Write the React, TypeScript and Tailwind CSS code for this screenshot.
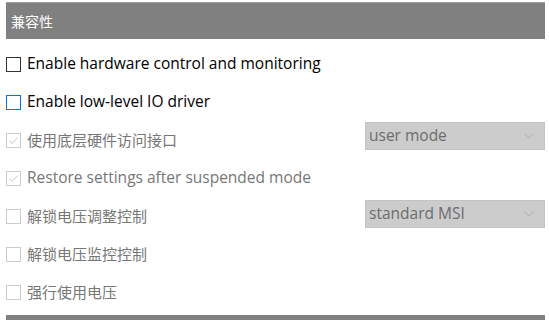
import React from "react";

const font = { fontFamily: '"Open Sans", "Noto Sans CJK SC", sans-serif' };

function Box({ state }: { state: "normal" | "focus" | "disabledChecked" | "disabled" }) {
  const border =
    state === "normal"
      ? "border-[#333333]"
      : state === "focus"
      ? "border-[#0078d7]"
      : "border-[#cccccc]";
  return (
    <div className={`w-[15px] h-[15px] border ${border} bg-white flex items-center justify-center shrink-0`}>
      {state === "disabledChecked" && (
        <svg width="11" height="11" viewBox="0 0 11 11">
          <path d="M1.5 5.8 L4.2 8.4 L9.6 2.6" fill="none" stroke="#c4c4c4" strokeWidth="1" />
        </svg>
      )}
    </div>
  );
}

function Select({ value, shift }: { value: string; shift: string }) {
  return (
    <div className={`w-[180px] h-[28px] bg-[#cccccc] border border-[#c3c3c3] flex items-center justify-between pl-[3px] pr-[10px] ${shift}`}>
      <span className="text-[15.5px] text-[#6d6d6d]" style={font}>{value}</span>
      <svg width="10" height="6" viewBox="0 0 10 6">
        <path d="M0.5 0.5 L5 5 L9.5 0.5" fill="none" stroke="#b0b0b0" strokeWidth="1" />
      </svg>
    </div>
  );
}

function Row({
  state,
  label,
  disabled,
  select,
  shift = "",
  cjk,
}: {
  state: "normal" | "focus" | "disabledChecked" | "disabled";
  label: string;
  disabled?: boolean;
  select?: string;
  shift?: string;
  cjk?: boolean;
}) {
  return (
    <div className="h-[38px] flex items-center justify-between">
      <div className="flex items-center gap-[6px]">
        <Box state={state} />
        <span
          className={`${cjk ? "text-[15px]" : "text-[15.5px]"} leading-none ${disabled ? "text-[#777777]" : "text-black"}`}
          style={font}
        >
          {label}
        </span>
      </div>
      {select && <Select value={select} shift={shift} />}
    </div>
  );
}

export default function App() {
  return (
    <div className="w-[549px] h-[320px] bg-white overflow-hidden pl-[6px] pr-[4px] pt-[2px] flex flex-col">
      <div className="h-[37px] bg-[#808080] border-t border-[#a0a0a0] flex items-center pl-[5px] shrink-0">
        <span className="text-white text-[14px]" style={font}>兼容性</span>
      </div>
      <div className="flex flex-col pt-[6px]">
        <Row state="normal" label="Enable hardware control and monitoring" />
        <Row state="focus" label="Enable low-level IO driver" />
        <Row state="disabledChecked" label="使用底层硬件访问接口" disabled cjk select="user mode" shift="mb-[8px]" />
        <Row state="disabledChecked" label="Restore settings after suspended mode" disabled />
        <Row state="disabled" label="解锁电压调整控制" disabled cjk select="standard MSI" shift="mb-[5px]" />
        <Row state="disabled" label="解锁电压监控控制" disabled cjk />
        <Row state="disabled" label="强行使用电压" disabled cjk />
      </div>
      <div className="mt-[4px] h-[6px] bg-[#808080] shrink-0" />
    </div>
  );
}
